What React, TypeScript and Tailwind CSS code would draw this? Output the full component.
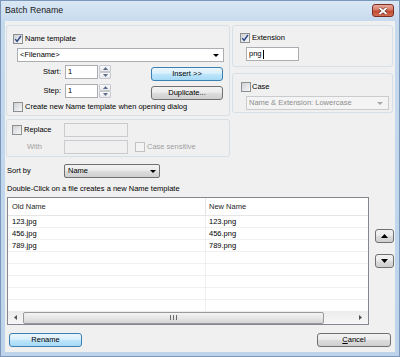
import clsx from 'clsx';
import React from 'react';

const btnFace = 'border-[#707070] bg-[linear-gradient(#f2f2f2_0%,#ebebeb_45%,#dddddd_50%,#cfcfcf_100%)]';
const btnDefault = 'border-[#3c7fb1] bg-[linear-gradient(#eaf6fd_0%,#d9f0fc_45%,#bee6fd_50%,#a7d9f5_100%)]';

const Check = ({ checked, disabled }: { checked?: boolean; disabled?: boolean }) => (
  <span
    className={clsx(
      'flex h-[10px] w-[10px] shrink-0 items-center justify-center border',
      disabled ? 'border-[#c2c2c2] bg-[#f4f4f4]' : 'border-[#8e8f8f] bg-[linear-gradient(135deg,#cdd1d7,#f7f7f7)]'
    )}
  >
    {checked && (
      <svg width="8" height="8" viewBox="0 0 8 8">
        <path d="M1.2 4.1 L3.1 6.3 L6.9 1" fill="none" stroke="#2b4484" strokeWidth="1.4" />
      </svg>
    )}
  </span>
);

const Field = ({
  className,
  children,
  disabled,
}: {
  className?: string;
  children?: React.ReactNode;
  disabled?: boolean;
}) => (
  <div
    className={clsx(
      'flex h-[14px] shrink-0 items-center border px-[2px]',
      disabled ? 'border-[#c9cbce] bg-[#f0f0f0]' : 'border-[#abadb3] bg-white',
      className
    )}
  >
    {children}
  </div>
);

const Arrow = ({ color = '#000' }: { color?: string }) => (
  <svg width="6" height="3" viewBox="0 0 6 3">
    <path d="M0 0h6L3 3z" fill={color} />
  </svg>
);

const Button = ({
  children,
  primary,
  className,
}: {
  children: React.ReactNode;
  primary?: boolean;
  className?: string;
}) => (
  <div
    className={clsx(
      'flex h-[14px] shrink-0 items-center justify-center rounded-[3px] border text-black',
      primary ? btnDefault : btnFace,
      className
    )}
  >
    {children}
  </div>
);

const Spinner = () => (
  <div className="ml-[1px] flex h-[14px] w-[12px] flex-col">
    <div className="flex h-[7px] items-center justify-center rounded-[1px] border border-[#c5c9cf] bg-[linear-gradient(#fbfbfb,#e8e8e8)]">
      <svg width="5" height="3" viewBox="0 0 5 3">
        <path d="M0 3h5L2.5 0z" fill="#5a6b8c" />
      </svg>
    </div>
    <div className="flex h-[7px] items-center justify-center rounded-[1px] border border-[#c5c9cf] bg-[linear-gradient(#fbfbfb,#e8e8e8)]">
      <svg width="5" height="3" viewBox="0 0 5 3">
        <path d="M0 0h5L2.5 3z" fill="#5a6b8c" />
      </svg>
    </div>
  </div>
);

const files = [
  ['123.jpg', '123.png'],
  ['456.jpg', '456.png'],
  ['789.jpg', '789.png'],
  ['', ''],
  ['', ''],
  ['', ''],
  ['', ''],
  ['', ''],
];

const FileList = () => (
  <div className="flex h-[128px] w-[362px] shrink-0 flex-col border border-[#828790] bg-white">
    <div className="flex h-[18px] shrink-0 border-b border-[#e5e5e5] text-[#1e1e1e]">
      <div className="flex w-[198px] items-center border-r border-[#e5e5e5] pl-[4px]">Old Name</div>
      <div className="flex flex-1 items-center pl-[3px]">New Name</div>
    </div>
    <div className="flex-1 overflow-hidden">
      {files.map(([oldName, newName], i) => (
        <div key={i} className="flex h-[12px] border-b border-[#f0f0f0]">
          <div className="flex w-[198px] items-center border-r border-[#f0f0f0] pl-[4px]">{oldName}</div>
          <div className="flex flex-1 items-center pl-[3px]">{newName}</div>
        </div>
      ))}
    </div>
    <div className="flex h-[13px] shrink-0 items-center bg-[linear-gradient(#ececec,#f6f6f6)]">
      <div className="flex h-full w-[15px] items-center justify-center">
        <svg width="3" height="5" viewBox="0 0 3 5">
          <path d="M3 0v5L0 2.5z" fill="#505050" />
        </svg>
      </div>
      <div className="flex h-[12px] w-[301px] items-center justify-center rounded-[2px] border border-[#999] bg-[linear-gradient(#f4f4f4,#e6e6e6_50%,#d6d6d6)]">
        <svg width="7" height="5" viewBox="0 0 7 5">
          <path d="M0.5 0v5M3.5 0v5M6.5 0v5" stroke="#6a6a6a" strokeWidth="1" />
        </svg>
      </div>
      <div className="flex h-full flex-1 items-center justify-end pr-[6px]">
        <svg width="3" height="5" viewBox="0 0 3 5">
          <path d="M0 0v5L3 2.5z" fill="#505050" />
        </svg>
      </div>
    </div>
  </div>
);

const Group = ({ className, children }: { className?: string; children: React.ReactNode }) => (
  <div className={clsx('flex flex-col rounded-[3px] border border-[#d5dfe5]', className)}>{children}</div>
);

export default function App() {
  return (
    <div className="h-[357px] w-[400px] bg-[linear-gradient(#dbe8f5,#c6daee_22px,#bcd3ea)] font-['Liberation_Sans',Arial,sans-serif] text-[7.5px] leading-none text-black shadow-[inset_0_0_0_1px_#7b98ba]">
      <div className="flex h-[21px] items-start justify-between pl-[5px] pr-[6px]">
        <span className="mt-[6px] text-[8.8px] text-[#1a1a1a]">Batch Rename</span>
        <div className="mt-[4px] flex h-[13px] w-[22px] items-center justify-center rounded-[3px] border border-[#7a3024] bg-[linear-gradient(#eaa999,#d77a66_45%,#c24a34_55%,#d36e52)]">
          <svg width="10" height="8" viewBox="0 0 10 8">
            <path d="M1.5 1l7 6M8.5 1l-7 6" stroke="#5a2a22" strokeWidth="3" />
            <path d="M1.5 1l7 6M8.5 1l-7 6" stroke="#fff" strokeWidth="1.8" />
          </svg>
        </div>
      </div>

      <div className="mx-[5px] flex h-[331px] flex-col bg-[#f0f0f0] pl-[1px] pt-[4px]">
        <div className="flex gap-[2px]">
          <div className="flex w-[224px] flex-col gap-[3px]">
            <Group className="h-[91px] pl-[6px] pt-[8px]">
              <div className="flex h-[10px] items-center gap-[2px]">
                <Check checked />
                <span>Name template</span>
              </div>
              <Field className="ml-[4px] mt-[4px] w-[207px] justify-between">
                <span>&lt;Filename&gt;</span>
                <span className="mr-[2px]">
                  <Arrow />
                </span>
              </Field>
              <div className="mt-[3px] flex items-start">
                <span className="flex h-[14px] w-[52px] items-center justify-end pr-[4px]">Start:</span>
                <Field className="w-[33px]">1</Field>
                <Spinner />
                <Button primary className="ml-[40px] mt-[2px] w-[72px]">
                  Insert &gt;&gt;
                </Button>
              </div>
              <div className="mt-[3px] flex items-start">
                <span className="flex h-[14px] w-[52px] items-center justify-end pr-[4px]">Step:</span>
                <Field className="w-[33px]">1</Field>
                <Spinner />
                <Button className="ml-[40px] mt-[2px] w-[72px]">Duplicate...</Button>
              </div>
              <div className="mt-[2px] flex h-[10px] items-center gap-[2px]">
                <Check />
                <span>Create new Name template when opening dialog</span>
              </div>
            </Group>

            <Group className="h-[38px] pl-[5px] pt-[3px]">
              <div className="flex items-center">
                <div className="flex w-[52px] items-center gap-[2px]">
                  <Check />
                  <span>Replace</span>
                </div>
                <Field disabled className="w-[64px]" />
              </div>
              <div className="mt-[3px] flex items-center">
                <span className="w-[52px] pl-[15px] text-[#a0a0a0]">With</span>
                <Field disabled className="w-[64px]" />
                <div className="ml-[7px] flex items-center gap-[2px]">
                  <Check disabled />
                  <span className="text-[#a0a0a0]">Case sensitive</span>
                </div>
              </div>
            </Group>
          </div>

          <div className="flex w-[161px] flex-col gap-[6px]">
            <Group className="h-[42px] pl-[7px] pt-[7px]">
              <div className="flex h-[10px] items-center gap-[2px]">
                <Check checked />
                <span>Extension</span>
              </div>
              <Field className="ml-[6px] mt-[4px] w-[53px] border-[#7eb4ea]">
                <span>png</span>
                <span className="ml-[1px] h-[9px] w-[1px] bg-black" />
              </Field>
            </Group>
            <Group className="h-[40px] pl-[8px] pt-[8px]">
              <div className="flex h-[10px] items-center gap-[1px]">
                <Check />
                <span>Case</span>
              </div>
              <Field disabled className="ml-[5px] mt-[4px] w-[143px] justify-between border-[#b8bcc0] bg-[#f4f4f4]">
                <span className="text-[#8d8d8d]">Name &amp; Extension: Lowercase</span>
                <span className="mr-[3px]">
                  <Arrow color="#a8a8a8" />
                </span>
              </Field>
            </Group>
          </div>
        </div>

        <div className="mt-[7px] flex items-center pl-[1px]">
          <span className="w-[57px]">Sort by</span>
          <div className={clsx('flex h-[14px] w-[96px] items-center justify-between rounded-[2px] border px-[3px]', btnFace)}>
            <span>Name</span>
            <Arrow />
          </div>
        </div>

        <div className="mt-[6px] flex h-[10px] items-center pl-[1px]">
          Double-Click on a file creates a new Name template
        </div>

        <div className="mt-[3px] flex pl-[1px]">
          <FileList />
          <div className="ml-[6px] flex flex-col gap-[11px] pt-[32px]">
            <Button className="h-[11px] w-[19px]">
              <svg width="7" height="4" viewBox="0 0 7 4">
                <path d="M0 4h7L3.5 0z" fill="#000" />
              </svg>
            </Button>
            <Button className="h-[11px] w-[19px]">
              <svg width="7" height="4" viewBox="0 0 7 4">
                <path d="M0 0h7L3.5 4z" fill="#000" />
              </svg>
            </Button>
          </div>
        </div>

        <div className="mt-[8px] flex pl-[3px] pr-[4px]">
          <Button primary className="w-[73px]">
            Rename
          </Button>
          <Button className="ml-auto w-[74px]">
            <span className="underline">C</span>ancel
          </Button>
        </div>
      </div>
    </div>
  );
}
